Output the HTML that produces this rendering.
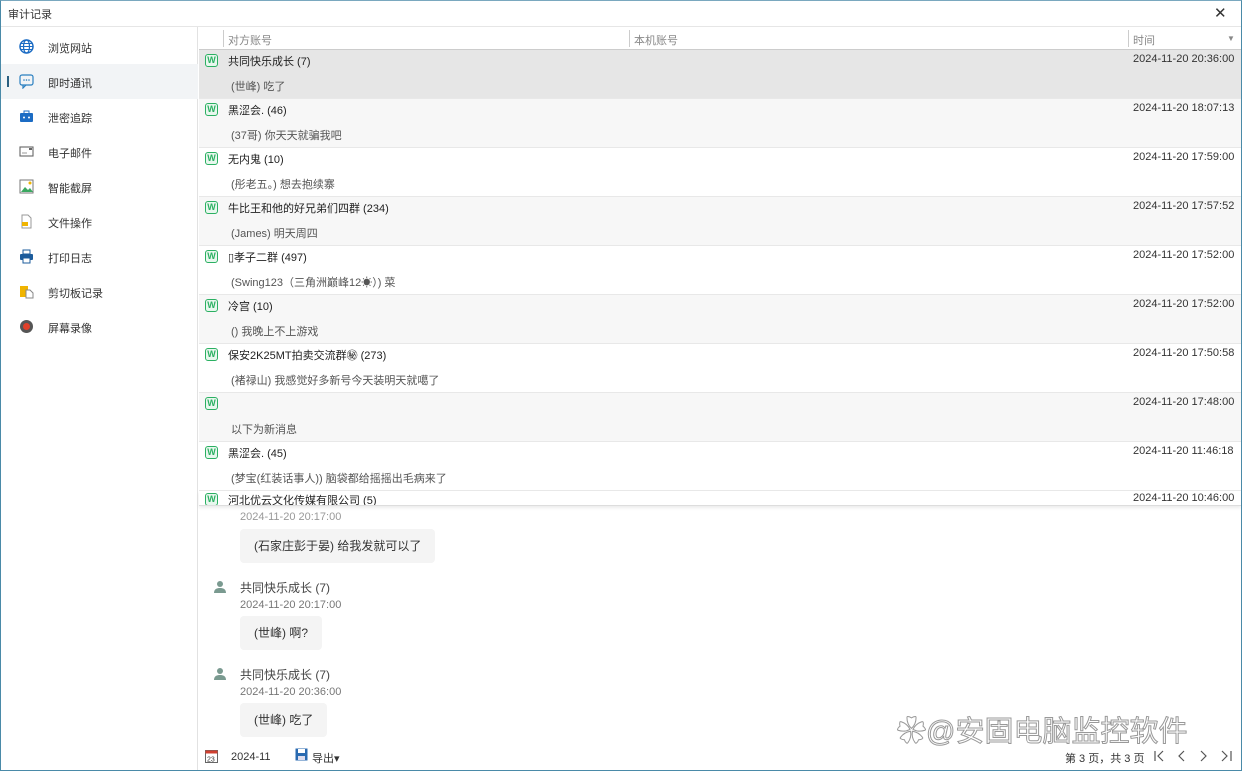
<!DOCTYPE html>
<html><head><meta charset="utf-8"><style>
*{box-sizing:border-box;margin:0;padding:0}
html,body{width:1242px;height:771px;overflow:hidden}
body{background:#fff;font-family:"Liberation Sans","Noto Sans CJK SC",sans-serif;font-size:11px;color:#333;position:relative;white-space:nowrap}
.win{position:absolute;left:0;top:0;width:1242px;height:771px;border:1px solid #4a8aa8;border-top-color:#7aa8bf}
.title{position:absolute;left:8px;top:6px;font-size:11px;color:#333}
.close{position:absolute;left:1214px;top:4px;font-size:15px;color:#333}
.tbar{position:absolute;left:1px;top:26px;width:1240px;height:1px;background:#e6e6e6}
.side{position:absolute;left:1px;top:27px;width:197px;height:743px;border-right:1px solid #e2e2e2}
.si{position:absolute;left:0;width:197px;height:35px}
.si span{position:absolute;left:47px;top:11px;font-size:11px;color:#333}
.si i{position:absolute;left:18px;top:10px;width:15px;height:15px}
.act{background:#f2f4f6}
.mark{position:absolute;left:6px;top:12px;width:2px;height:11px;background:#2a5f80}
.hdr{position:absolute;left:199px;top:27px;width:1042px;height:23px;border-bottom:1px solid #ccc;color:#888;font-size:11px}
.hdr span{position:absolute;top:5px}
.hdr b{position:absolute;top:3px;width:1px;height:17px;background:#ccc}
.row{position:absolute;left:199px;width:1042px;height:49px;border-bottom:1px solid #e8e8e8}
.row .w{position:absolute;left:6px;top:4px;width:13px;height:13px;border:1.5px solid #2bb062;border-radius:3px;background:#e8f7ee;color:#2bb062;font-size:9px;line-height:10px;text-align:center;font-weight:bold}
.row .n{position:absolute;left:29px;top:3px;color:#222}
.row .m{position:absolute;left:32px;top:28px;color:#555}
.row .t{position:absolute;left:934px;top:3px;color:#333}
.chat{position:absolute;left:199px;top:505px;width:1042px;height:237px;overflow:hidden}
.bub{position:absolute;left:41px;background:#f4f4f4;border-radius:4px;height:34px;padding:0 14px;line-height:34px;font-size:12px;color:#333}
.nm{position:absolute;left:41px;font-size:12px;color:#444}
.ts{position:absolute;left:41px;font-size:11px;color:#777}
.av{position:absolute;left:14px;width:14px;height:14px}
.foot{position:absolute;left:199px;top:742px;width:1042px;height:28px}
.pg{position:absolute;top:5px;font-size:15px;color:#555}
</style></head><body>
<div class="win"></div>
<div class="title">审计记录</div>
<div class="close">✕</div>
<div class="tbar"></div>
<div class="side">
<div class="si" style="top:2px"><i><svg width="15" height="15" viewBox="0 0 15 15"><circle cx="7.5" cy="7.5" r="6.5" fill="none" stroke="#1c6cc4" stroke-width="1.5"/><ellipse cx="7.5" cy="7.5" rx="3" ry="6.5" fill="none" stroke="#1c6cc4" stroke-width="1.2"/><path d="M1 7.5h13M2 4.5h11M2 10.5h11" stroke="#1c6cc4" stroke-width="1"/></svg></i><span>浏览网站</span></div>
<div class="si act" style="top:37px"><div class="mark"></div><i><svg width="15" height="15" viewBox="0 0 15 15"><rect x="1" y="1" width="13" height="10" rx="2" fill="none" stroke="#2a7fc0" stroke-width="1.2"/><path d="M4 11v3l3-3" fill="none" stroke="#2a7fc0" stroke-width="1.2"/><circle cx="5" cy="6" r=".8" fill="#2a7fc0"/><circle cx="7.5" cy="6" r=".8" fill="#2a7fc0"/><circle cx="10" cy="6" r=".8" fill="#2a7fc0"/></svg></i><span>即时通讯</span></div>
<div class="si" style="top:72px"><i><svg width="15" height="15" viewBox="0 0 15 15"><rect x="1" y="4" width="13" height="9" rx="1" fill="#1c6cc4"/><rect x="5" y="2" width="5" height="3" fill="none" stroke="#1c6cc4"/><circle cx="5" cy="8.5" r="1" fill="#fff"/><circle cx="10" cy="8.5" r="1" fill="#fff"/></svg></i><span>泄密追踪</span></div>
<div class="si" style="top:107px"><i><svg width="15" height="15" viewBox="0 0 15 15"><rect x="1" y="3" width="13" height="9" fill="none" stroke="#666" stroke-width="1.1"/><path d="M3 9h5" stroke="#999"/><rect x="10" y="4" width="3" height="2" fill="#666"/></svg></i><span>电子邮件</span></div>
<div class="si" style="top:142px"><i><svg width="15" height="15" viewBox="0 0 15 15"><rect x="1" y="1" width="13" height="13" fill="#fff" stroke="#777"/><path d="M2 13l4-5 3 3 2-2 3 4z" fill="#3aa860"/><circle cx="11" cy="4" r="1.5" fill="#f0b400"/></svg></i><span>智能截屏</span></div>
<div class="si" style="top:177px"><i><svg width="15" height="15" viewBox="0 0 15 15"><path d="M3 1h6l3 3v10H3z" fill="#fff" stroke="#999"/><rect x="3" y="8" width="6" height="4" fill="#f0b400"/></svg></i><span>文件操作</span></div>
<div class="si" style="top:212px"><i><svg width="15" height="15" viewBox="0 0 15 15"><rect x="4" y="1" width="7" height="4" fill="#fff" stroke="#1c5c9c"/><rect x="1" y="5" width="13" height="6" rx="1" fill="#1c5c9c"/><rect x="4" y="9" width="7" height="5" fill="#fff" stroke="#1c5c9c"/></svg></i><span>打印日志</span></div>
<div class="si" style="top:247px"><i><svg width="15" height="15" viewBox="0 0 15 15"><rect x="1" y="2" width="8" height="11" fill="#f0b400"/><path d="M7 6h4l3 3v5H7z" fill="#fff" stroke="#888"/></svg></i><span>剪切板记录</span></div>
<div class="si" style="top:282px"><i><svg width="15" height="15" viewBox="0 0 15 15"><circle cx="7.5" cy="7.5" r="6.5" fill="#555"/><circle cx="7.5" cy="7.5" r="3.5" fill="#e0402a"/></svg></i><span>屏幕录像</span></div>
</div>
<div class="hdr"><b style="left:24px"></b><span style="left:29px">对方账号</span><b style="left:430px"></b><span style="left:435px">本机账号</span><b style="left:929px"></b><span style="left:934px">时间</span><span style="left:1028px;font-size:8px;top:7px">▼</span></div>
<div class="row" style="top:50px;background:#e6e6e6"><div class="w">W</div><div class="n">共同快乐成长 (7)</div><div class="m">(世峰) 吃了</div><div class="t">2024-11-20 20:36:00</div></div>
<div class="row" style="top:99px;background:#f7f7f7"><div class="w">W</div><div class="n">黑涩会. (46)</div><div class="m">(37哥) 你天天就骗我吧</div><div class="t">2024-11-20 18:07:13</div></div>
<div class="row" style="top:148px"><div class="w">W</div><div class="n">无内鬼 (10)</div><div class="m">(彤老五。) 想去抱续寨</div><div class="t">2024-11-20 17:59:00</div></div>
<div class="row" style="top:197px;background:#f7f7f7"><div class="w">W</div><div class="n">牛比王和他的好兄弟们四群 (234)</div><div class="m">(James) 明天周四</div><div class="t">2024-11-20 17:57:52</div></div>
<div class="row" style="top:246px"><div class="w">W</div><div class="n">▯孝子二群 (497)</div><div class="m">(Swing123（三角洲巅峰12☀）) 菜</div><div class="t">2024-11-20 17:52:00</div></div>
<div class="row" style="top:295px;background:#f7f7f7"><div class="w">W</div><div class="n">冷宫 (10)</div><div class="m">() 我晚上不上游戏</div><div class="t">2024-11-20 17:52:00</div></div>
<div class="row" style="top:344px"><div class="w">W</div><div class="n">保安2K25MT拍卖交流群㊙ (273)</div><div class="m">(褚禄山) 我感觉好多新号今天装明天就噶了</div><div class="t">2024-11-20 17:50:58</div></div>
<div class="row" style="top:393px;background:#f7f7f7"><div class="w">W</div><div class="n"></div><div class="m" style="left:32px">以下为新消息</div><div class="t">2024-11-20 17:48:00</div></div>
<div class="row" style="top:442px"><div class="w">W</div><div class="n">黑涩会. (45)</div><div class="m">(梦宝(红装话事人)) 脑袋都给摇摇出毛病来了</div><div class="t">2024-11-20 11:46:18</div></div>
<div class="row" style="top:491px;height:15px;overflow:hidden;border-bottom:1px solid #ddd;box-shadow:0 2px 3px rgba(0,0,0,.08)"><div class="w" style="top:2px">W</div><div class="n" style="top:1px">河北优云文化传媒有限公司 (5)</div><div class="t" style="top:1px">2024-11-20 10:46:00</div></div>
<div class="chat">
<div class="ts" style="top:6px;color:#999">2024-11-20 20:17:00</div>
<div class="bub" style="top:24px">(石家庄彭于晏) 给我发就可以了</div>
<div class="av" style="top:75px"><svg width="14" height="14" viewBox="0 0 14 14"><circle cx="7" cy="4" r="3" fill="#7a9a90"/><path d="M1 13c0-4 3-5 6-5s6 1 6 5z" fill="#7a9a90"/></svg></div>
<div class="nm" style="top:74px">共同快乐成长 (7)</div>
<div class="ts" style="top:94px">2024-11-20 20:17:00</div>
<div class="bub" style="top:111px">(世峰) 啊?</div>
<div class="av" style="top:162px"><svg width="14" height="14" viewBox="0 0 14 14"><circle cx="7" cy="4" r="3" fill="#7a9a90"/><path d="M1 13c0-4 3-5 6-5s6 1 6 5z" fill="#7a9a90"/></svg></div>
<div class="nm" style="top:161px">共同快乐成长 (7)</div>
<div class="ts" style="top:181px">2024-11-20 20:36:00</div>
<div class="bub" style="top:198px">(世峰) 吃了</div>
</div>
<div style="position:absolute;left:897px;top:708px;font-size:29px;color:#fff;-webkit-text-stroke:1px #999">✿@安固电脑监控软件</div>
<div class="foot">
<svg style="position:absolute;left:6px;top:7px" width="13" height="14" viewBox="0 0 13 14"><rect x=".5" y="1.5" width="12" height="12" fill="#fff" stroke="#666"/><rect x=".5" y="1.5" width="12" height="3" fill="#d04030"/><text x="2" y="12.5" font-size="7" fill="#333" font-family="Liberation Sans">23</text></svg>
<span style="position:absolute;left:32px;top:9px;color:#333">2024-11</span>
<svg style="position:absolute;left:96px;top:6px" width="13" height="13" viewBox="0 0 13 13"><rect x=".5" y=".5" width="12" height="12" fill="#2a6ab0"/><rect x="3" y="1" width="7" height="4" fill="#fff"/><rect x="3" y="8" width="7" height="4" fill="#dde"/></svg>
<span style="position:absolute;left:113px;top:8px;color:#333">导出▾</span>
<span style="position:absolute;left:866px;top:8px;color:#333">第 3 页，共 3 页</span>
<svg style="position:absolute;left:955px;top:8px" width="80" height="12" viewBox="0 0 80 12"><g fill="none" stroke="#555" stroke-width="1.2"><path d="M1 1v10M9 1L4 6l5 5"/><path d="M30 1l-5 5 5 5"/><path d="M47 1l5 5-5 5"/><path d="M68 1l5 5-5 5M77 1v10"/></g></svg>
</div>
</body></html>
